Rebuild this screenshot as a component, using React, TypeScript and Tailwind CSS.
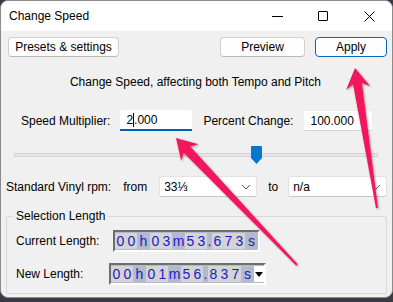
import React from "react"

const font = { fontFamily: '"Liberation Sans", Arial, sans-serif' }

function TimeField({ parts, dropdown }: { parts: { t: string; d: boolean }[]; dropdown?: boolean }) {
  return (
    <div className="flex h-[22px] border-2 border-t-[#6e6e6e] border-l-[#6e6e6e] border-b-white border-r-white bg-[#b3bacb]">
      {parts.map((p, i) => (
        <div
          key={i}
          className={
            p.d
              ? "flex items-center my-[1px] bg-[#d4d4d6] text-[#1a1ac4] text-[14px]"
              : "flex items-center justify-center text-[#1a1ac4] text-[14px]"
          }
        >
          {p.d
            ? p.t.split("").map((c, j) => (
                <span key={j} className="w-[11px] text-center">{c}</span>
              ))
            : <span className={p.t === "." ? "w-[5px] text-center" : "w-[13px] text-center"}>{p.t}</span>}
        </div>
      ))}
      {dropdown && (
        <div className="w-[10px] bg-white flex items-center justify-center my-[1px]">
          <svg width="8" height="5" viewBox="0 0 8 5"><path d="M0 0H8L4 5Z" fill="#000" /></svg>
        </div>
      )}
    </div>
  )
}

function split(s: string) {
  // digits grouped, separators alone
  const out: { t: string; d: boolean }[] = []
  for (const c of s) {
    const d = /\d/.test(c)
    const last = out[out.length - 1]
    if (d && last && last.d) last.t += c
    else out.push({ t: c, d })
  }
  return out
}

function Chevron() {
  return (
    <svg width="10" height="6" viewBox="0 0 10 6" fill="none">
      <path d="M1 1L5 5L9 1" stroke="#555" strokeWidth="1" />
    </svg>
  )
}

export default function App() {
  return (
    <div className="relative w-[393px] h-[302px] overflow-hidden bg-[#3a3946] text-[12px] text-black" style={font}>
      <div className="h-[298px] rounded-lg border border-[#8c8c8c] bg-[#f0f0f0] overflow-hidden flex flex-col">
        {/* title bar */}
        <div className="h-[30px] bg-white flex items-center shrink-0">
          <div className="pl-[8px] text-[12px] flex-1">Change Speed</div>
          <div className="w-[46px] h-full flex items-center justify-center">
            <div className="w-[11px] h-px bg-black" />
          </div>
          <div className="w-[46px] h-full flex items-center justify-center">
            <div className="w-[10px] h-[10px] border border-black rounded-[1px]" />
          </div>
          <div className="w-[46px] h-full flex items-center justify-center">
            <svg width="11" height="11" viewBox="0 0 11 11"><path d="M0.5 0.5L10.5 10.5M10.5 0.5L0.5 10.5" stroke="#000" strokeWidth="1" /></svg>
          </div>
        </div>

        {/* buttons */}
        <div className="flex mt-[6px] h-[20px] pl-[7px] pr-[5px]">
          <button className="w-[111px] h-full rounded-[4px] border border-[#d0d0d0] border-b-[#b8b8b8] bg-[#fdfdfd] text-[12px]">Presets &amp; settings</button>
          <div className="flex-1" />
          <button className="w-[85px] h-full rounded-[4px] border border-[#d0d0d0] border-b-[#b8b8b8] bg-[#fdfdfd] text-[12px]">Preview</button>
          <button className="ml-[10px] w-[72px] h-full rounded-[4px] border border-[#0067c0] bg-[#fdfdfd] text-[12px] shadow-[inset_0_0_0_1px_#ffffff]">Apply</button>
        </div>

        <div className="mt-[17px] h-[16px] leading-[16px] text-center pr-[2px]">Change Speed, affecting both Tempo and Pitch</div>

        {/* speed row */}
        <div className="mt-[20px] h-[21px] flex items-center pl-[20px]">
          <span>Speed Multiplier:</span>
          <div className="ml-[10px] w-[72px] h-full bg-white rounded-t-[3px] border-b-2 border-[#005fb8] flex items-center pl-[6px]">
            <span>2</span>
            <span className="w-px h-[14px] bg-black" />
            <span>.000</span>
          </div>
          <span className="ml-[11px]">Percent Change:</span>
          <div className="ml-[10px] w-[70px] h-full bg-white border border-[#ececec] border-b-[#d4d4d4] rounded-[2px] flex items-center pl-[6px]">100.000</div>
        </div>

        {/* slider */}
        <div className="mt-[15px] h-[18px] relative mx-[13px] mr-[14px] flex items-center">
          <div className="w-full h-[4px] bg-[#e6e6e6] border border-[#d4d4d4]" />
          <svg className="absolute left-[237px] top-0" width="11" height="18" viewBox="0 0 11 18">
            <path d="M1 0H10A1 1 0 0 1 11 1V12L5.5 18L0 12V1A1 1 0 0 1 1 0Z" fill="#0078d4" />
          </svg>
        </div>

        {/* vinyl row */}
        <div className="mt-[12px] h-[21px] flex items-center pl-[5px]">
          <span>Standard Vinyl rpm:</span>
          <span className="ml-[12px]">from</span>
          <div className="ml-[12px] w-[98px] h-full bg-white border border-[#e2e2e2] border-b-[#c8c8c8] rounded-[3px] flex items-center justify-between pl-[4px] pr-[5px]">
            <span>33⅓</span>
            <Chevron />
          </div>
          <span className="ml-[11px]">to</span>
          <div className="ml-[10px] w-[99px] h-full bg-white border border-[#e2e2e2] border-b-[#c8c8c8] rounded-[3px] flex items-center justify-between pl-[4px] pr-[5px]">
            <span>n/a</span>
            <Chevron />
          </div>
        </div>

        {/* selection length */}
        <fieldset className="mt-[11px] ml-[5px] w-[381px] border border-[#d9d9d9] rounded-[2px] pb-[8px]">
          <legend className="ml-[6px] px-[3px] h-[16px] leading-[16px]">Selection Length</legend>
          <div className="mt-[6px] flex items-center pl-[9px]">
            <span className="w-[97px]">Current Length:</span>
            <TimeField parts={split("00h03m53.673s")} />
          </div>
          <div className="mt-[11px] flex items-center pl-[9px]">
            <span className="w-[93px]">New Length:</span>
            <TimeField parts={split("00h01m56.837s")} dropdown />
          </div>
        </fieldset>
      </div>

      {/* annotation arrows */}
      <svg className="absolute inset-0 pointer-events-none" width="393" height="302" viewBox="0 0 393 302">
        <defs>
          <filter id="sh" x="-20%" y="-20%" width="140%" height="140%">
            <feDropShadow dx="1" dy="1" stdDeviation="1" floodColor="#000" floodOpacity="0.35" />
          </filter>
        </defs>
        <g fill="#f2175f" filter="url(#sh)">
          <polygon points="176,138 198.5,144.2 190.3,146.5 297.7,264.3 296.3,265.7 183.7,152.7 181.1,160.8" />
          <polygon points="355,68 370,86 361.9,83.1 378,207.8 376,208.2 353.1,84.5 346.2,89.7" />
        </g>
      </svg>
    </div>
  )
}
